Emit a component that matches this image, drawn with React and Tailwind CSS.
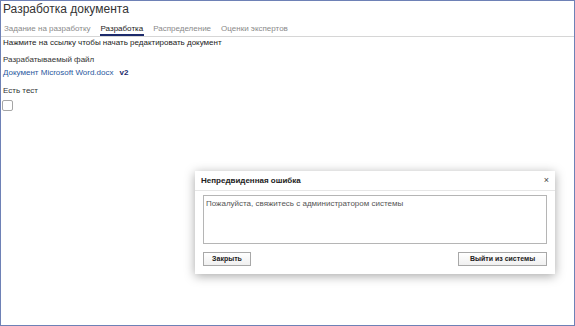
import React from 'react';

const tabs = ['Задание на разработку', 'Разработка', 'Распределение', 'Оценки экспертов'];

const App = () => {
  return (
    <div className="relative w-[575px] h-[326px] overflow-hidden border border-[#6e81b6] bg-white font-['Liberation_Sans',Arial,sans-serif] text-[#222]">
      {/* Title */}
      <div className="px-[2px] text-[12px] leading-[16px] text-[#333]">Разработка документа</div>

      {/* Tabs */}
      <div className="flex gap-[8px] border-b border-[#d6d6d6] px-[2px]">
        {tabs.map((t, i) => (
          <div
            key={t}
            className={
              i === 1
                ? 'border-b-2 border-[#1c2a6b] px-[1px] pt-[7px] pb-[1px] text-[8px] leading-[9px] text-[#222]'
                : 'border-b-2 border-transparent px-[1px] pt-[7px] pb-[1px] text-[8px] leading-[9px] text-[#8a8a8a]'
            }
          >
            {t}
          </div>
        ))}
      </div>

      {/* Content */}
      <div className="px-[2px] text-[8px]">
        <div className="leading-[11px]">Нажмите на ссылку чтобы начать редактировать документ</div>
        <div className="mt-[6px] leading-[12px] text-[#333]">Разрабатываемый файл</div>
        <div className="mt-[1px] leading-[12px]">
          <span className="text-[#2a579e]">Документ Microsoft Word.docx</span>
          <span className="ml-[6px] font-bold text-[#1c2a6b]">v2</span>
        </div>
        <div className="mt-[6px] leading-[12px] text-[#333]">Есть тест</div>
        <div className="mt-[3px] -ml-[1px] h-[11px] w-[11px] rounded-[2px] border border-[#a6a6a6] bg-white" />
      </div>

      {/* Error dialog */}
      <div className="absolute left-[194px] top-[170px] w-[360px] h-[103px] bg-white shadow-[0_2px_10px_rgba(0,0,0,0.35)] flex flex-col">
        <div className="flex h-[20px] items-center justify-between border-b border-[#e6e6e6] pl-[6px] pr-[6px]">
          <span className="text-[8px] font-bold text-[#222]">Непредвиденная ошибка</span>
          <span className="text-[9px] leading-none text-[#444]">×</span>
        </div>
        <div className="px-[8px] pt-[4px]">
          <div className="h-[49px] border border-[#b5b5b5] px-[2px] pt-[3px] text-[8px] leading-[10px] text-[#555]">
            Пожалуйста, свяжитесь с администратором системы
          </div>
          <div className="mt-[8px] flex justify-between">
            <div className="flex h-[14px] w-[48px] items-center justify-center border border-[#a8a8a8] bg-gradient-to-b from-white to-[#f0f0f0] text-[7px] font-bold text-[#222]">
              Закрыть
            </div>
            <div className="flex h-[14px] w-[89px] items-center justify-center border border-[#a8a8a8] bg-gradient-to-b from-white to-[#f0f0f0] text-[7px] font-bold text-[#222]">
              Выйти из системы
            </div>
          </div>
        </div>
      </div>
    </div>
  );
};

export default App;
